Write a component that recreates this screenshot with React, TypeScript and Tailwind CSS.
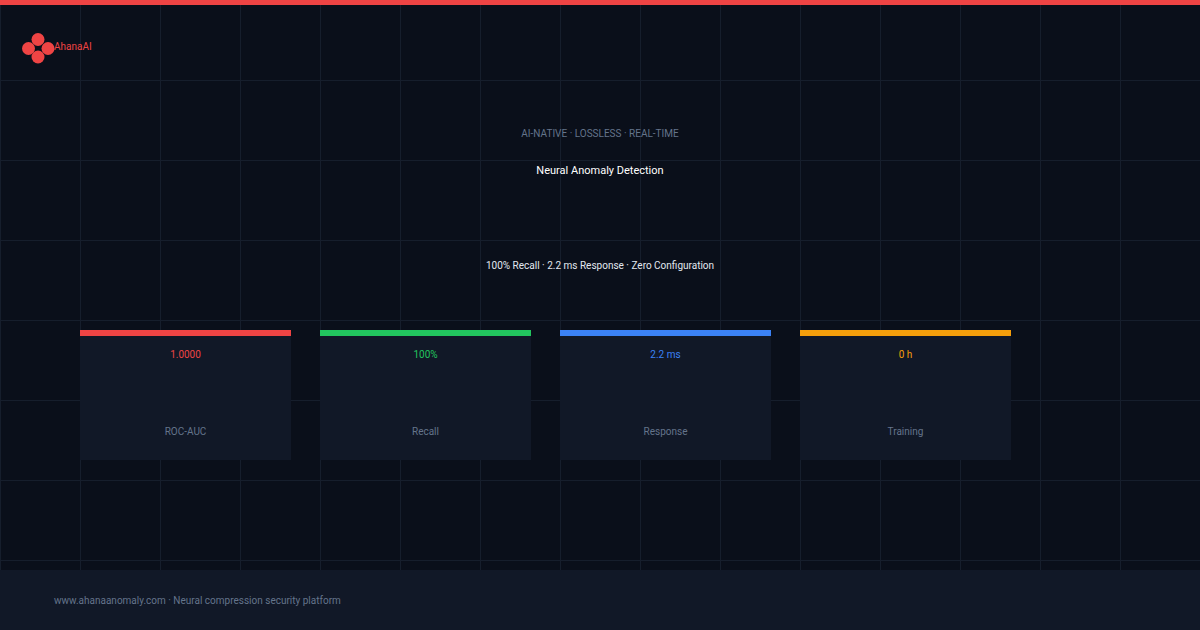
export default function App() {
  const cards = [
    { v: "1.0000", l: "ROC-AUC", c: "bg-[#ef4444]", t: "text-[#ef4444]" },
    { v: "100%", l: "Recall", c: "bg-[#22c55e]", t: "text-[#22c55e]" },
    { v: "2.2 ms", l: "Response", c: "bg-[#3b82f6]", t: "text-[#3b82f6]" },
    { v: "0 h", l: "Training", c: "bg-[#f59e0b]", t: "text-[#f59e0b]" },
  ];
  return (
    <div className="relative w-[1200px] h-[630px] overflow-hidden bg-[#0a0f1a] [font-family:Roboto,sans-serif]">
      <div className="absolute inset-0 bg-[linear-gradient(to_right,#161e2c_1px,transparent_1px),linear-gradient(to_bottom,#161e2c_1px,transparent_1px)] bg-[size:80px_80px]" />
      <div className="relative flex flex-col h-full">
        <div className="h-[5px] bg-[#ef4444]" />
        <div className="h-[565px] flex flex-col">
          <div className="flex items-center h-[30px] mt-[28px] pl-[22px]">
            <svg width="34" height="32" viewBox="0 0 34 32">
              <circle cx="16" cy="7.5" r="6.5" fill="#ef4444" />
              <circle cx="6.5" cy="16.5" r="6.5" fill="#ef4444" />
              <circle cx="26" cy="16.5" r="6.5" fill="#ef4444" />
              <circle cx="16" cy="25" r="6.5" fill="#ef4444" />
            </svg>
            <span className="text-[10px] text-[#ef4444] -ml-[2px] -mt-[4px]">AhanaAI</span>
          </div>
          <div className="mt-[64px] text-center text-[10px] text-[#64748b] leading-[14px]">AI-NATIVE · LOSSLESS · REAL-TIME</div>
          <div className="mt-[22px] text-center text-[11px] text-white leading-[16px]">Neural Anomaly Detection</div>
          <div className="mt-[80px] text-center text-[10px] text-[#e2e8f0] leading-[14px]">100% Recall · 2.2 ms Response · Zero Configuration</div>
          <div className="mt-[57px] flex gap-[29px] pl-[80px]">
            {cards.map((c) => (
              <div key={c.l} className="w-[211px] h-[130px] bg-[#111827] flex flex-col">
                <div className={`h-[6px] ${c.c}`} />
                <div className={`mt-[12px] text-center text-[10px] leading-[14px] ${c.t}`}>{c.v}</div>
                <div className="mt-[63px] text-center text-[10px] leading-[14px] text-[#64748b]">{c.l}</div>
              </div>
            ))}
          </div>
        </div>
        <div className="h-[60px] bg-[#111827] flex items-center pl-[54px] text-[10px] text-[#64748b]">
          www.ahanaanomaly.com · Neural compression security platform
        </div>
      </div>
    </div>
  );
}
